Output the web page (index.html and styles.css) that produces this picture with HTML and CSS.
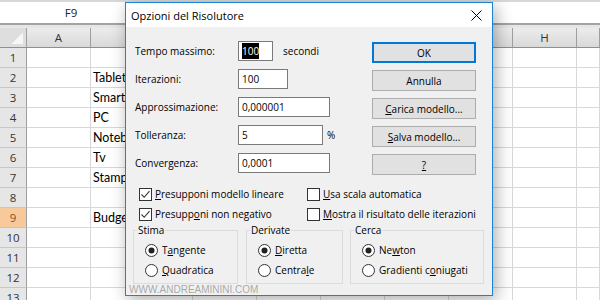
FILE: index.html
```html
<!DOCTYPE html>
<html lang="it">
<head>
<meta charset="utf-8">
<title>Opzioni del Risolutore</title>
<link rel="stylesheet" href="styles.css">
</head>
<body>
<div class="sheet">
  <div class="namebar"><div class="namebox">F9</div></div>
  <div class="band"></div>
  <div class="grid">
    <div class="corner"></div>
    <div class="colh">A</div><div class="colh">B</div><div class="colh">C</div><div class="colh">D</div><div class="colh">E</div><div class="colh">F</div><div class="colh">G</div><div class="colh">H</div><div class="colh"></div>

    <div class="rowh">1</div><div class="cell"></div><div class="cell"></div><div class="cell"></div><div class="cell"></div><div class="cell"></div><div class="cell"></div><div class="cell"></div><div class="cell"></div><div class="cell"></div>
    <div class="rowh">2</div><div class="cell"></div><div class="cell">Tablet</div><div class="cell"></div><div class="cell"></div><div class="cell"></div><div class="cell"></div><div class="cell"></div><div class="cell"></div><div class="cell"></div>
    <div class="rowh">3</div><div class="cell"></div><div class="cell">Smartphone</div><div class="cell"></div><div class="cell"></div><div class="cell"></div><div class="cell"></div><div class="cell"></div><div class="cell"></div><div class="cell"></div>
    <div class="rowh">4</div><div class="cell"></div><div class="cell">PC</div><div class="cell"></div><div class="cell"></div><div class="cell"></div><div class="cell"></div><div class="cell"></div><div class="cell"></div><div class="cell"></div>
    <div class="rowh">5</div><div class="cell"></div><div class="cell">Notebook</div><div class="cell"></div><div class="cell"></div><div class="cell"></div><div class="cell"></div><div class="cell"></div><div class="cell"></div><div class="cell"></div>
    <div class="rowh">6</div><div class="cell"></div><div class="cell">Tv</div><div class="cell"></div><div class="cell"></div><div class="cell"></div><div class="cell"></div><div class="cell"></div><div class="cell"></div><div class="cell"></div>
    <div class="rowh">7</div><div class="cell"></div><div class="cell">Stampante</div><div class="cell"></div><div class="cell"></div><div class="cell"></div><div class="cell"></div><div class="cell"></div><div class="cell"></div><div class="cell"></div>
    <div class="rowh">8</div><div class="cell"></div><div class="cell"></div><div class="cell"></div><div class="cell"></div><div class="cell"></div><div class="cell"></div><div class="cell"></div><div class="cell"></div><div class="cell"></div>
    <div class="rowh sel">9</div><div class="cell"></div><div class="cell">Budget</div><div class="cell"></div><div class="cell"></div><div class="cell"></div><div class="cell"></div><div class="cell"></div><div class="cell"></div><div class="cell"></div>
    <div class="rowh">10</div><div class="cell"></div><div class="cell"></div><div class="cell"></div><div class="cell"></div><div class="cell"></div><div class="cell"></div><div class="cell"></div><div class="cell"></div><div class="cell"></div>
    <div class="rowh">11</div><div class="cell"></div><div class="cell"></div><div class="cell"></div><div class="cell"></div><div class="cell"></div><div class="cell"></div><div class="cell"></div><div class="cell"></div><div class="cell"></div>
    <div class="rowh">12</div><div class="cell"></div><div class="cell"></div><div class="cell"></div><div class="cell"></div><div class="cell"></div><div class="cell"></div><div class="cell"></div><div class="cell"></div><div class="cell"></div>
    <div class="rowh">13</div><div class="cell"></div><div class="cell"></div><div class="cell"></div><div class="cell"></div><div class="cell"></div><div class="cell"></div><div class="cell"></div><div class="cell"></div><div class="cell"></div>
  </div>
</div>

<div class="dialog">
  <div class="titlebar">
    <span class="title">Opzioni del Risolutore</span>
    <svg class="close" width="11" height="11" viewBox="0 0 11 11"><path d="M0.5 0.5 L10.5 10.5 M10.5 0.5 L0.5 10.5" stroke="#000" stroke-width="1" fill="none"/></svg>
  </div>
  <div class="body">
    <div class="form">
      <span class="lbl">Tempo massimo:</span>
      <div class="field"><span class="input w35"><span class="hl">100</span></span><span class="unit">secondi</span></div>
      <div class="btn ok">OK</div>

      <span class="lbl">Iterazioni:</span>
      <div class="field"><span class="input w50">100</span></div>
      <div class="btn">Annulla</div>

      <span class="lbl">Approssimazione:</span>
      <div class="field"><span class="input w92">0,000001</span></div>
      <div class="btn"><u>C</u>arica modello...</div>

      <span class="lbl">Tolleranza:</span>
      <div class="field"><span class="input w85">5</span><span class="pct">%</span></div>
      <div class="btn"><u>S</u>alva modello...</div>

      <span class="lbl">Convergenza:</span>
      <div class="field"><span class="input w92">0,0001</span></div>
      <div class="btn"><u>?</u></div>
    </div>

    <div class="checks">
      <div class="chk"><svg class="box" width="13" height="13" viewBox="0 0 13 13"><rect x="0.5" y="0.5" width="12" height="12" fill="#fff" stroke="#333"/><path d="M2.5 6.5 L5.2 9.3 L10.5 3.2" stroke="#333" stroke-width="1.1" fill="none"/></svg><span><u>P</u>resupponi modello lineare</span></div>
      <div class="chk"><svg class="box" width="13" height="13" viewBox="0 0 13 13"><rect x="0.5" y="0.5" width="12" height="12" fill="#fff" stroke="#333"/></svg><span><u>U</u>sa scala automatica</span></div>
      <div class="chk"><svg class="box" width="13" height="13" viewBox="0 0 13 13"><rect x="0.5" y="0.5" width="12" height="12" fill="#fff" stroke="#333"/><path d="M2.5 6.5 L5.2 9.3 L10.5 3.2" stroke="#333" stroke-width="1.1" fill="none"/></svg><span>Presupp<u>o</u>ni non negativo</span></div>
      <div class="chk"><svg class="box" width="13" height="13" viewBox="0 0 13 13"><rect x="0.5" y="0.5" width="12" height="12" fill="#fff" stroke="#333"/></svg><span><u>M</u>ostra il risultato delle iterazioni</span></div>
    </div>

    <div class="groups">
      <fieldset class="grp g1">
        <legend>Stima</legend>
        <div class="radio"><svg width="13" height="13" viewBox="0 0 13 13"><circle cx="6.5" cy="6.5" r="6" fill="#fff" stroke="#333"/><circle cx="6.5" cy="6.5" r="3" fill="#222"/></svg><span>T<u>a</u>ngente</span></div>
        <div class="radio"><svg width="13" height="13" viewBox="0 0 13 13"><circle cx="6.5" cy="6.5" r="6" fill="#fff" stroke="#333"/></svg><span><u>Q</u>uadratica</span></div>
      </fieldset>
      <fieldset class="grp g2">
        <legend>Derivate</legend>
        <div class="radio"><svg width="13" height="13" viewBox="0 0 13 13"><circle cx="6.5" cy="6.5" r="6" fill="#fff" stroke="#333"/><circle cx="6.5" cy="6.5" r="3" fill="#222"/></svg><span><u>D</u>iretta</span></div>
        <div class="radio"><svg width="13" height="13" viewBox="0 0 13 13"><circle cx="6.5" cy="6.5" r="6" fill="#fff" stroke="#333"/></svg><span>Centra<u>l</u>e</span></div>
      </fieldset>
      <fieldset class="grp g3">
        <legend>Cerca</legend>
        <div class="radio"><svg width="13" height="13" viewBox="0 0 13 13"><circle cx="6.5" cy="6.5" r="6" fill="#fff" stroke="#333"/><circle cx="6.5" cy="6.5" r="3" fill="#222"/></svg><span>Ne<u>w</u>ton</span></div>
        <div class="radio"><svg width="13" height="13" viewBox="0 0 13 13"><circle cx="6.5" cy="6.5" r="6" fill="#fff" stroke="#333"/></svg><span>Gradienti c<u>o</u>niugati</span></div>
      </fieldset>
    </div>
    <div class="watermark">WWW.ANDREAMININI.COM</div>
  </div>
</div>
</body>
</html>
```

FILE: styles.css
```css
* { box-sizing: border-box; }
html, body { margin: 0; padding: 0; }
body {
  width: 600px;
  height: 300px;
  overflow: hidden;
  background: #fff;
  position: relative;
  font-family: "Open Sans", "Noto Sans", sans-serif;
}

/* ---------- spreadsheet ---------- */
.sheet { width: 600px; overflow: hidden; }
.namebar {
  height: 25px;
  background: #fff;
  border-top: 2px solid #d8d8d8;
  border-bottom: 2px solid #a3a3a3;
  display: flex;
}
.namebox {
  width: 142px;
  height: 21px;
  line-height: 21px;
  text-align: center;
  font-size: 11.5px;
  color: #222;
}
.band { height: 3px; background: #e6e6e6; }

.grid {
  display: grid;
  grid-template-columns: 27px 64px 102px repeat(6, 64px) 23px;
  grid-auto-rows: 20px;
}
.corner {
  border-right: 1px solid #9e9e9e;
  border-bottom: 1px solid #8f8f8f;
  background-color: #dedede;
  background-image: linear-gradient(135deg, transparent 50%, #f7f7f7 50%);
  background-size: 11px 11px;
  background-position: right 3px bottom 3px;
  background-repeat: no-repeat;
}
.colh {
  border-right: 1px solid #9e9e9e;
  border-bottom: 1px solid #8f8f8f;
  background: linear-gradient(#ececec, #d9d9d9);
  text-align: center;
  font-size: 11.5px;
  line-height: 19px;
  color: #333;
}
.rowh {
  border-right: 1px solid #9e9e9e;
  border-bottom: 1px solid #c6c6c6;
  background: #e6e6e6;
  text-align: center;
  font-size: 11.5px;
  line-height: 19px;
  color: #333;
}
.rowh.sel { background: #f7c99b; color: #8f4f1c; }
.cell {
  border-right: 1px solid #d8d8d8;
  border-bottom: 1px solid #d8d8d8;
  font-family: "Lato", "Liberation Sans", sans-serif;
  font-size: 12.5px;
  line-height: 20px;
  padding-left: 2px;
  white-space: nowrap;
  overflow: hidden;
  color: #000;
}

/* ---------- dialog ---------- */
.dialog {
  position: absolute;
  left: 125px;
  top: 2px;
  width: 368px;
  height: 294px;
  border: 1px solid #1883d7;
  background: #f0f0f0;
  box-shadow: 3px 4px 16px rgba(0, 0, 0, 0.33);
  display: flex;
  flex-direction: column;
  font-size: 10px;
  color: #000;
}
.titlebar {
  height: 24px;
  flex: none;
  background: #fff;
  display: flex;
  align-items: center;
  justify-content: space-between;
  padding: 0 10px 0 5px;
}
.title { font-size: 11px; }
.close { display: block; }

.body {
  flex: 1;
  padding: 14px 0 0 9px;
  overflow: hidden;
}
.form {
  display: grid;
  grid-template-columns: 103px 134px 104px;
  grid-auto-rows: 20px;
  row-gap: 8px;
  align-items: center;
}
.field { display: flex; align-items: center; height: 20px; }
.input {
  height: 20px;
  border: 1px solid #7a7a7a;
  background: #fff;
  padding: 0 3px;
  line-height: 18px;
  white-space: nowrap;
}
.w35 { width: 35px; }
.w50 { width: 50px; }
.w85 { width: 85px; }
.w92 { width: 92px; }
.hl { background: #000; color: #fff; padding: 1px 0; }
.unit { margin-left: 10px; }
.pct { margin-left: 4px; }

.btn {
  align-self: start;
  height: 21px;
  margin-top: 1px;
  border: 1px solid #adadad;
  background: #e1e1e1;
  display: flex;
  align-items: center;
  justify-content: center;
}
.btn.ok { border: 2px solid #0078d7; }

.checks {
  margin: 11px 0 0 4px;
  display: grid;
  grid-template-columns: 168px auto;
  grid-auto-rows: 20px;
}
.chk { display: flex; align-items: center; gap: 3px; white-space: nowrap; }
.chk .box { display: block; flex: none; }

.groups {
  display: flex;
  gap: 8px;
  margin-left: -2px;
}
.grp {
  margin: 0;
  padding: 4px 0 3px 11px;
  border: 1px solid #dcdcdc;
  min-width: 0;
}
.g1 { width: 105px; }
.g2 { width: 97px; }
.g3 { width: 134px; margin-left: -1px; }
.grp legend {
  padding: 0 1px;
  margin-left: -8px;
  line-height: 12px;
  font-size: 10px;
}
.radio { height: 20px; display: flex; align-items: center; gap: 4px; white-space: nowrap; }
.radio svg { display: block; flex: none; }

.watermark {
  margin-left: -6px;
  font-family: "Liberation Sans", Arial, sans-serif;
  font-size: 10px;
  line-height: 11px;
  color: #a6a6a6;
  text-shadow: 0 0 1px #fff;
}
```
